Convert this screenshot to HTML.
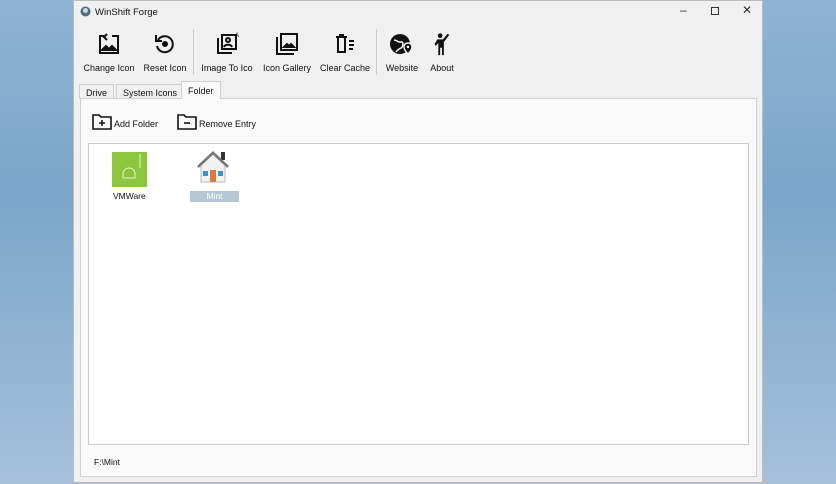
<!DOCTYPE html>
<html><head><style>
*{margin:0;padding:0;box-sizing:border-box}
body{width:836px;height:484px;overflow:hidden;background:linear-gradient(180deg,#8fb3d3 0%,#7aa6c9 40%,#a6c0da 100%);font-family:"Liberation Sans",sans-serif;font-size:9px;color:#111;position:relative}
.win{position:absolute;left:73px;top:0;width:690px;height:483px;background:#f0f0f0;border:1px solid #bbb}
.t{position:absolute;white-space:nowrap}
.tb{position:absolute;top:31px;text-align:center;font-size:9px;white-space:nowrap}
.tb svg{display:block;margin:0 auto 7px}
.sep{position:absolute;top:28px;width:1px;height:46px;background:#ccc}
.tab{position:absolute;top:82px;height:16px;border:1px solid #d0d0d0;border-bottom:none;background:#f0f0f0;padding:3px 6px 0;font-size:9px;white-space:nowrap}
.panel{position:absolute;left:6px;top:97px;width:677px;height:379px;background:#fafafa;border:1px solid #d0d0d0}
.list{position:absolute;left:7px;top:44px;width:661px;height:302px;background:#fff;border:1px solid #ccc}
</style></head><body>
<div class="win">
<svg class="t" style="left:6px;top:5px" width="11" height="11"><circle cx="5.5" cy="5.5" r="5" fill="#4d6d80"/><circle cx="5.5" cy="4.5" r="2.5" fill="#cfd8dc"/></svg>
<div class="t" style="left:21px;top:6px;font-size:9.5px">WinShift Forge</div>
<div class="t" style="left:606px;top:2px;font-size:12px;color:#333">–</div>
<div class="t" style="left:637px;top:6px;width:8px;height:8px;border:1px solid #333"></div>
<div class="t" style="left:668px;top:2px;font-size:12px;color:#333">✕</div>

<div class="tb" style="left:8px;width:54px"><svg width="24" height="24" viewBox="0 0 24 24" fill="none" stroke="#111" stroke-width="2"><path d="M7 4H3v17h18V4h-6"/><path d="M5 18l4-4 3 3 3-3 4 4z" fill="#111"/><path d="M10 2L7 5l3 3"/></svg>Change Icon</div>
<div class="tb" style="left:68px;width:46px"><svg width="24" height="24" viewBox="0 0 24 24" fill="none" stroke="#111" stroke-width="2"><path d="M5 8a8 8 0 1 1-1 6"/><path d="M3 3v6h6"/><circle cx="12" cy="12" r="2" fill="#111"/></svg>Reset Icon</div>
<div class="sep" style="left:119px"></div>
<div class="tb" style="left:126px;width:54px"><svg width="26" height="24" viewBox="0 0 26 24" fill="none" stroke="#111" stroke-width="2"><path d="M4 6v15h14"/><rect x="8" y="3" width="14" height="14"/><circle cx="14" cy="8" r="2"/><path d="M10 15c1-3 7-3 8 0"/><text x="21" y="5" font-size="6" fill="#111" stroke="none">A</text></svg>Image To Ico</div>
<div class="tb" style="left:188px;width:50px"><svg width="26" height="24" viewBox="0 0 26 24" fill="none" stroke="#111" stroke-width="2"><path d="M3 5v17h17"/><rect x="7" y="2" width="16" height="16"/><path d="M10 15l3-3 2 2 2-2 3 3z" fill="#111"/></svg>Icon Gallery</div>
<div class="tb" style="left:246px;width:50px"><svg width="26" height="24" viewBox="0 0 26 24" fill="none" stroke="#111" stroke-width="2"><path d="M4 5h11M8 5V3h3v2M6 5v15h7V5"/><path d="M17 9h5M17 13h5M17 17h4"/></svg>Clear Cache</div>
<div class="sep" style="left:302px"></div>
<div class="tb" style="left:308px;width:40px"><svg width="26" height="24" viewBox="0 0 26 24"><circle cx="11" cy="12" r="10" fill="#111"/><path d="M5 8c3 0 4 3 7 2s2 5 0 6-4 2-5 4" stroke="#fff" stroke-width="1.5" fill="none"/><path d="M19 11c-3 0-4 2-4 4 0 3 4 7 4 7s4-4 4-7c0-2-1-4-4-4z" fill="#111" stroke="#f0f0f0" stroke-width="1.5"/><circle cx="19" cy="15" r="1.2" fill="#fff"/></svg>Website</div>
<div class="tb" style="left:350px;width:36px"><svg width="24" height="24" viewBox="0 0 24 26"><circle cx="10" cy="4" r="2.5" fill="#111"/><path d="M7 8h6l5-6 2 1-6 8v14h-2v-8h-2v8H8V12L5 15 4 13z" fill="#111"/></svg>About</div>

<div class="tab" style="left:5px;top:83px;height:15px">Drive</div>
<div class="tab" style="left:42px;top:83px;height:15px">System Icons</div>
<div class="tab" style="left:107px;top:80px;height:18px;background:#fafafa;padding-top:4px;z-index:2">Folder</div>
<div class="panel">
<svg class="t" style="left:11px;top:14px" width="20" height="17" viewBox="0 0 20 17" fill="none" stroke="#111" stroke-width="1.6"><path d="M1 2h6l2 2h10v12H1z"/><path d="M10 7v6M7 10h6"/></svg>
<div class="t" style="left:33px;top:20px">Add Folder</div>
<svg class="t" style="left:96px;top:14px" width="20" height="17" viewBox="0 0 20 17" fill="none" stroke="#111" stroke-width="1.6"><path d="M1 2h6l2 2h10v12H1z"/><path d="M7 10h6"/></svg>
<div class="t" style="left:118px;top:20px">Remove Entry</div>
<div class="list">
<div class="t" style="left:23px;top:8px;width:35px;height:35px;background:#8cc63f"></div>
<svg class="t" style="left:23px;top:8px" width="35" height="35" viewBox="0 0 35 35" fill="none" stroke="#e8f5d0" stroke-width="1"><path d="M11 26v-4a6 6 0 0 1 12 0v4z"/><path d="M28 2v14"/></svg>
<div class="t" style="left:24px;top:47px;font-size:8.5px">VMWare</div>
<svg class="t" style="left:104px;top:3px" width="40" height="40" viewBox="0 0 40 40"><path d="M4 19L20 4l16 15" fill="#8a9099"/><rect x="28" y="5" width="4" height="8" fill="#333"/><path d="M8 18L20 7l12 11v17H8z" fill="#f2f2f2" stroke="#bbb"/><rect x="10" y="24" width="5" height="5" fill="#3a8fd6"/><rect x="25" y="24" width="5" height="5" fill="#3a8fd6"/><rect x="17" y="23" width="6" height="12" fill="#d97a3a"/><path d="M5 20L20 6l15 14" stroke="#777" stroke-width="2.5" fill="none"/></svg>
<div class="t" style="left:101px;top:47px;width:49px;height:11px;background:#b6c7d3;color:#fff;text-align:center;font-size:8.5px;line-height:11px">Mint</div>
</div>
<div class="t" style="left:13px;top:358px;font-size:8.5px">F:\Mint</div>
</div>
</div>
</body></html>
